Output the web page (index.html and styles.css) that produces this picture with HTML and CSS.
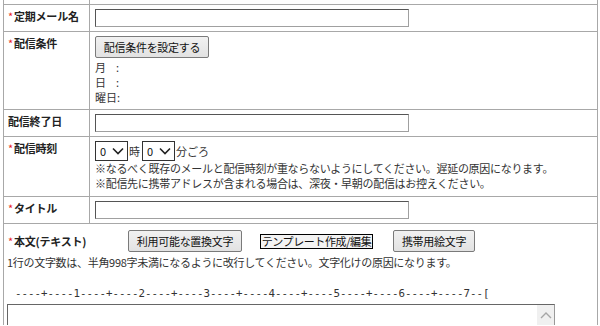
FILE: index.html
```html
<!DOCTYPE html>
<html lang="ja">
<head>
<meta charset="utf-8">
<title>定期メール設定</title>
<link rel="stylesheet" href="styles.css">
</head>
<body>
<div class="form">
  <div class="row row-top"><div class="lbl"></div><div class="val"></div></div>

  <div class="row">
    <div class="lbl"><span class="req">*</span>定期メール名</div>
    <div class="val"><span class="input"></span></div>
  </div>

  <div class="row">
    <div class="lbl"><span class="req">*</span>配信条件</div>
    <div class="val">
      <span class="btn btn-cond">配信条件を設定する</span>
      <div class="cond-lines">
        <div class="line">月<span class="colon">:</span></div>
        <div class="line">日<span class="colon">:</span></div>
        <div class="line">曜日:</div>
      </div>
    </div>
  </div>

  <div class="row">
    <div class="lbl">配信終了日</div>
    <div class="val"><span class="input"></span></div>
  </div>

  <div class="row">
    <div class="lbl"><span class="req">*</span>配信時刻</div>
    <div class="val">
      <div class="time">
        <span class="select"><span>0</span><svg width="12" height="8" viewBox="0 0 12 8"><polyline points="1,1.5 6,6.5 11,1.5" fill="none" stroke="#222" stroke-width="1.6"/></svg></span>
        <span class="unit">時</span>
        <span class="select"><span>0</span><svg width="12" height="8" viewBox="0 0 12 8"><polyline points="1,1.5 6,6.5 11,1.5" fill="none" stroke="#222" stroke-width="1.6"/></svg></span>
        <span class="unit">分ごろ</span>
      </div>
      <div class="note">※なるべく既存のメールと配信時刻が重ならないようにしてください。遅延の原因になります。</div>
      <div class="note">※配信先に携帯アドレスが含まれる場合は、深夜・早朝の配信はお控えください。</div>
    </div>
  </div>

  <div class="row">
    <div class="lbl"><span class="req">*</span>タイトル</div>
    <div class="val"><span class="input"></span></div>
  </div>

  <div class="row row-body">
    <div class="body-head">
      <div class="lbl-body"><span class="req">*</span>本文(テキスト)</div>
      <span class="btn btn-repl">利用可能な置換文字</span>
      <span class="btn-tpl">テンプレート作成/編集</span>
      <span class="btn btn-emoji">携帯用絵文字</span>
    </div>
    <div class="note">1行の文字数は、半角998字未満になるように改行してください。文字化けの原因になります。</div>
    <div class="ruler">----+----1----+----2----+----3----+----4----+----5----+----6----+----7--[</div>
    <div class="textarea">
      <div class="ta-content"></div>
      <div class="ta-scroll"><svg width="12" height="8" viewBox="0 0 12 8"><polyline points="1,7 6,2 11,7" fill="none" stroke="#a6a6a6" stroke-width="1.4"/></svg></div>
    </div>
  </div>
</div>
</body>
</html>
```

FILE: styles.css
```css
* { box-sizing: border-box; }
html, body { margin: 0; padding: 0; background: #fff; }
body {
  font-family: "Noto Sans CJK JP", "Noto Sans", sans-serif;
  font-size: 11px;
  color: #333;
  width: 600px;
  height: 326px;
  overflow: hidden;
}
.form {
  margin-left: 3px;
  width: 595px;
  border-left: 1px solid #a8a8a8;
  border-right: 1px solid #a8a8a8;
}
.row {
  display: grid;
  grid-template-columns: 86px 1fr;
  border-bottom: 1px solid #a8a8a8;
}
.row-top { height: 5px; }
.lbl {
  border-right: 1px solid #a8a8a8;
  padding: 4px 0 0 4px;
  line-height: 15px;
  font-weight: bold;
  color: #222;
  letter-spacing: -0.2px;
}
.req { color: #e8231f; font-weight: normal; margin-right: 1px; }
.val {
  padding: 4px 0 4px 5px;
  line-height: 15px;
}
.input {
  display: block;
  width: 314px;
  height: 18px;
  border: 1px solid;
  border-color: #555 #a0a0a0 #a0a0a0 #555;
  background: #fff;
}
.btn {
  display: inline-flex;
  align-items: center;
  justify-content: center;
  height: 22px;
  border: 1px solid #7a7a7a;
  border-radius: 2px;
  background: linear-gradient(#f1f1f1, #e2e2e2);
  color: #111;
  letter-spacing: -0.3px;
}
.btn-cond { width: 114px; }
.cond-lines { margin-top: 2px; }
.line { height: 15px; }
.colon { margin-left: 10px; }
.time { display: flex; align-items: center; height: 20px; }
.select {
  display: inline-flex;
  align-items: center;
  justify-content: space-between;
  width: 33px;
  height: 20px;
  border: 1px solid #333;
  background: #fff;
  padding: 0 3px 0 4px;
  color: #111;
}
.unit { margin: 0 2px 0 1px; color: #333; }
.note { letter-spacing: -0.3px; line-height: 15px; }
.row:nth-child(5) .val { padding-bottom: 5px; }
.row-body {
  display: block;
  padding: 6px 0 0 3px;
  border-bottom: none;
  height: 101px;
  overflow: hidden;
}
.body-head { display: flex; align-items: center; height: 22px; }
.lbl-body {
  width: 121px;
  padding-left: 1px;
  font-weight: bold;
  color: #222;
  letter-spacing: -0.2px;
}
.btn-repl { width: 114px; margin-right: 18px; }
.btn-tpl {
  display: inline-flex;
  align-items: center;
  justify-content: center;
  width: 113px;
  height: 15px;
  border: 1px solid #000;
  background: #f3f3f3;
  color: #111;
  letter-spacing: -0.4px;
  margin-right: 20px;
}
.btn-emoji { width: 82px; }
.row-body .note { margin-top: 3px; }
.ruler {
  margin-top: 16px;
  padding-left: 8px;
  font-family: "DejaVu Sans Mono", monospace;
  font-size: 10.8px;
  line-height: 15px;
  color: #333;
}
.textarea {
  display: flex;
  margin-top: 3px;
  width: 548px;
  height: 60px;
  border: 1px solid;
  border-color: #666 #999 #999 #666;
}
.ta-content { flex: 1; }
.ta-scroll {
  width: 17px;
  background: #f0f0f0;
  display: flex;
  justify-content: center;
  padding-top: 6px;
}
```
